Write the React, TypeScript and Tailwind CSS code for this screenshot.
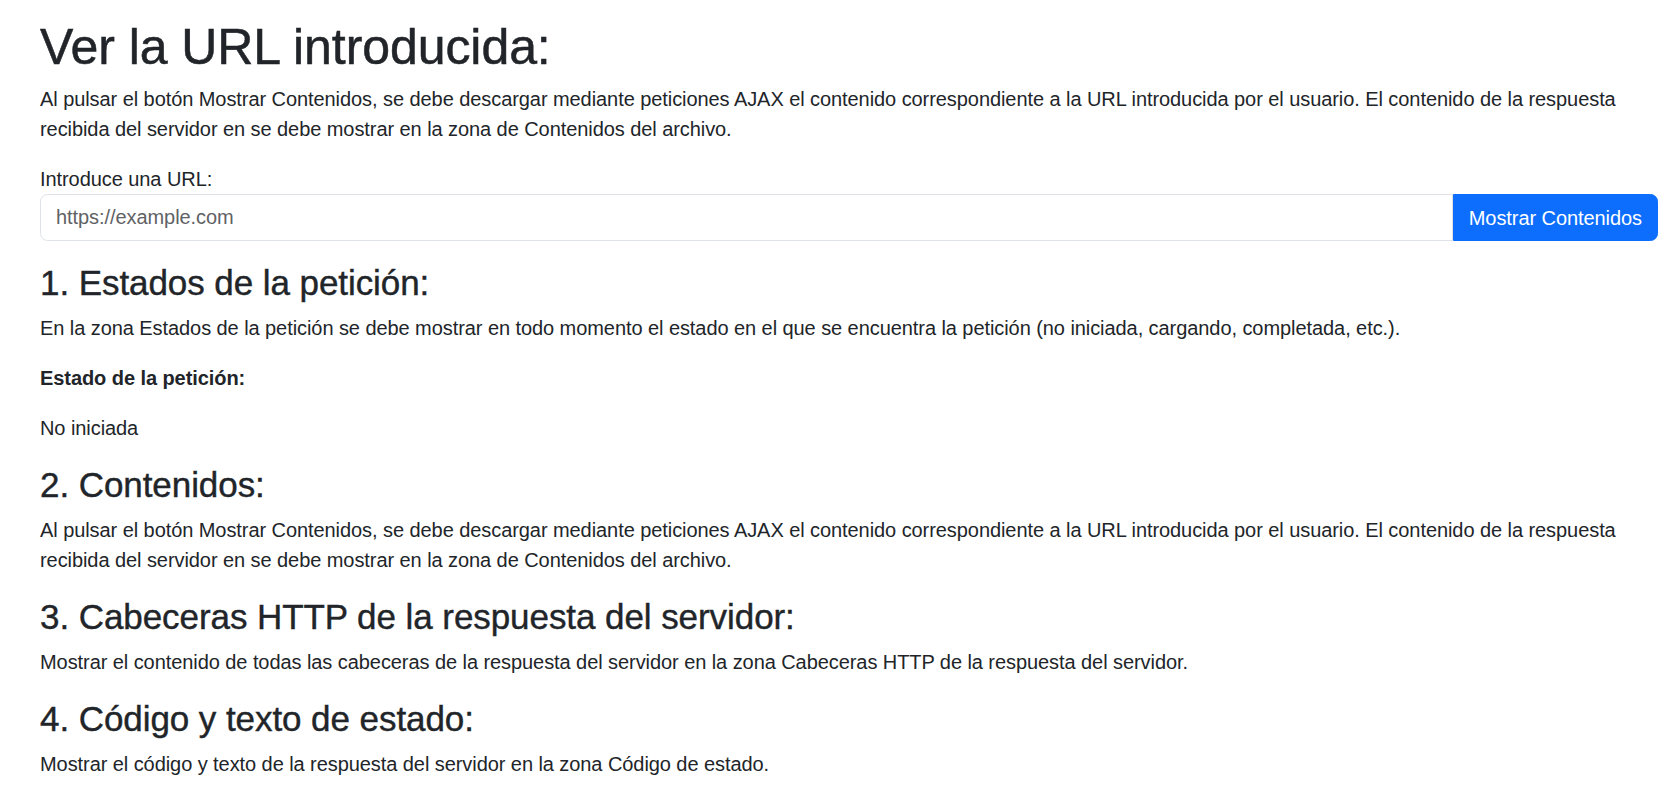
import React from "react";

const intro =
  "Al pulsar el botón Mostrar Contenidos, se debe descargar mediante peticiones AJAX el contenido correspondiente a la URL introducida por el usuario. El contenido de la respuesta recibida del servidor en se debe mostrar en la zona de Contenidos del archivo.";

function Section({ title, children }: { title: string; children: React.ReactNode }) {
  return (
    <section>
      <h3 className="mb-[10px] pt-[2px] text-[35px] font-medium leading-[40px] [-webkit-text-stroke:0.4px]">{title}</h3>
      {children}
    </section>
  );
}

export default function App() {
  return (
    <div
      className="min-h-screen bg-white pb-6 pl-[40px] pr-[16px] pt-[14px] text-[20px] leading-[30px] tracking-[-0.07px] text-[#212529]"
      style={{ fontFamily: '"Liberation Sans", Arial, sans-serif' }}
    >
      <h1 className="mb-[10px] pt-[6px] text-[50px] font-medium leading-[54px] [-webkit-text-stroke:0.5px]">
        Ver la URL introducida:
      </h1>
      <p className="mb-[20px]">{intro}</p>

      <form className="mb-[20px]" onSubmit={(e) => e.preventDefault()}>
        <label htmlFor="url" className="block leading-[30px]">
          Introduce una URL:
        </label>
        <div className="flex">
          <input
            id="url"
            type="text"
            placeholder="https://example.com"
            className="h-[47px] min-w-0 flex-1 rounded-l-[7.5px] border border-[#dee2e6] bg-white px-[15px] text-[20px] text-[#212529] outline-none placeholder:text-[#5f6265]"
          />
          <button
            type="submit"
            className="h-[47px] shrink-0 rounded-r-[7.5px] border border-[#0d6efd] bg-[#0d6efd] px-[15px] text-[20px] text-white"
          >
            Mostrar Contenidos
          </button>
        </div>
      </form>

      <Section title="1. Estados de la petición:">
        <p className="mb-[20px]">
          En la zona Estados de la petición se debe mostrar en todo momento el estado en el que se encuentra la petición (no
          iniciada, cargando, completada, etc.).
        </p>
        <p className="mb-[20px]">
          <strong className="font-bold">Estado de la petición:</strong>
        </p>
        <p className="mb-[20px]">No iniciada</p>
      </Section>

      <Section title="2. Contenidos:">
        <p className="mb-[20px]">{intro}</p>
      </Section>

      <Section title="3. Cabeceras HTTP de la respuesta del servidor:">
        <p className="mb-[20px]">
          Mostrar el contenido de todas las cabeceras de la respuesta del servidor en la zona Cabeceras HTTP de la respuesta
          del servidor.
        </p>
      </Section>

      <Section title="4. Código y texto de estado:">
        <p className="mb-[20px]">Mostrar el código y texto de la respuesta del servidor en la zona Código de estado.</p>
      </Section>
    </div>
  );
}
